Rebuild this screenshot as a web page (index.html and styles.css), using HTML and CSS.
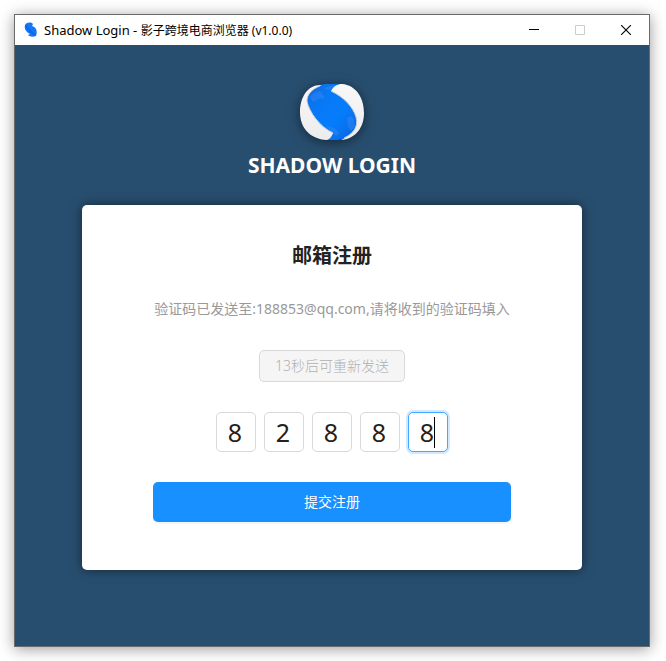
FILE: index.html
```html
<!DOCTYPE html>
<html lang="zh-CN">
<head>
    <meta charset="UTF-8">
    <meta name="viewport" content="width=device-width, initial-scale=1.0">
    <title>Shadow Login</title>
    <link rel="stylesheet" href="styles.css">
</head>
<body>
    <div class="window">
        <header class="titlebar">
            <svg class="titlebar-icon" viewBox="0 0 16 16" aria-hidden="true">
                <path d="M2 3C4 0 8 0 10 2L9 4C13 5 15 9 13 14C10 15 7 15 5 13L7 12C3 10 1 7 2 3Z" fill="#1677f5"/>
                <path d="M3 3C4 7 8 10 12 13" fill="none" stroke="#0b66e8" stroke-width="2"/>
            </svg>
            <span class="titlebar-text"><span class="app-name">Shadow Login - </span>影子跨境电商浏览器 (v1.0.0)</span>
            <div class="window-controls">
                <button type="button" aria-label="最小化">
                    <svg viewBox="0 0 10 10"><path d="M0 4.5H10" stroke="#000"/></svg>
                </button>
                <button type="button" aria-label="最大化" disabled>
                    <svg viewBox="0 0 10 10"><path d="M.5 .5H9.500V9.500H.5Z" fill="none" stroke="#ccc"/></svg>
                </button>
                <button type="button" aria-label="关闭">
                    <svg viewBox="0 0 10 10"><path d="M0 0L10 10M10 0L0 10" stroke="#000" stroke-width="1.1"/></svg>
                </button>
            </div>
        </header>

        <main class="content">
            <svg class="logo" viewBox="0 0 64 56" aria-hidden="true">
                <defs>
                    <linearGradient id="blue" x1="0" y1="0" x2="1" y2="1">
                        <stop offset="0" stop-color="#1668dc"/>
                        <stop offset="0.300" stop-color="#0878f5"/>
                        <stop offset="0.600" stop-color="#057dfb"/>
                        <stop offset="1" stop-color="#0b62dd"/>
                    </linearGradient>
                    <linearGradient id="white" x1="0" y1="0" x2="0" y2="1">
                        <stop offset="0" stop-color="#f8f8f8"/>
                        <stop offset="1" stop-color="#ececee"/>
                    </linearGradient>
                </defs>
                <path d="M20 1C28-1 36-1 40 1L33 7C45 14 54 25 58 36C58 46 51 53 42 55C35 57 29 56 25 55L31 50C18 42 8 27 7 14C10 7 15 2 20 1Z" fill="url(#blue)"/>
                <path d="M10 13C13 9 17 8 20 7L23 11L25 15C20 13 18 16 13 18ZM23 4L31 2L36 1L33 5L28 6ZM47 34L51 32L54 35L55 43L51 47L48 43ZM26 42L34 44L40 49L36 52L32 49Z" fill="#3f8df2" opacity="0.400"/>
                <path d="M22 1C8 0 0 13 0 28C0 43 9 55 27 56C30 55 32 52 33 49C20 43 9 28 7 17C7 9 14 4 22 1Z" fill="url(#white)"/>
                <path d="M31 7C34 2 37 0 42 0C56 1 64 14 64 29C64 44 55 55 41 56C53 50 59 43 56 33C53 23 44 13 31 7Z" fill="url(#white)"/>
                <path d="M20 2C12 5 7 10 7 17C9 28 20 43 33 49" fill="none" stroke="#ccd0d6"/>
                <path d="M31 7C44 13 53 23 56 33C59 43 53 50 44 54" fill="none" stroke="#ccd0d6"/>
            </svg>
            <h1 class="brand">SHADOW LOGIN</h1>

            <form class="card">
                <h2 class="card-title">邮箱注册</h2>
                <p class="hint">验证码已发送至:188853@qq.com,请将收到的验证码填入</p>
                <button class="resend" type="button" disabled>13秒后可重新发送</button>
                <div class="code" role="group" aria-label="验证码">
                    <div class="digit"><input type="text" maxlength="1" value="8" aria-label="第1位"></div>
                    <div class="digit"><input type="text" maxlength="1" value="2" aria-label="第2位"></div>
                    <div class="digit"><input type="text" maxlength="1" value="8" aria-label="第3位"></div>
                    <div class="digit"><input type="text" maxlength="1" value="8" aria-label="第4位"></div>
                    <div class="digit active"><input type="text" maxlength="1" value="8" aria-label="第5位"></div>
                </div>
                <button class="submit" type="submit">提交注册</button>
            </form>
        </main>
    </div>
</body>
</html>
```

FILE: styles.css
```css
* {
    box-sizing: border-box;
}
body {
    margin: 0;
    padding: 14px 16px 14px 14px;
    min-height: 100vh;
    display: flex;
    background: #fff;
    font-family: "Noto Sans", "Noto Sans CJK SC", sans-serif;
    font-size: 14px;
    color: #222;
}
button,
input {
    font-family: inherit;
}
.window {
    flex: 1;
    display: flex;
    flex-direction: column;
    border: 1px solid #686a6c;
    box-shadow: 0 2px 14px rgba(0, 0, 0, 0.4);
}

/* title bar */
.titlebar {
    display: flex;
    align-items: center;
    height: 30px;
    padding-left: 8px;
    background: #fff;
}
.titlebar-icon {
    width: 16px;
    height: 16px;
}
.titlebar-text {
    flex: 1;
    margin-left: 5px;
    font-size: 12px;
    line-height: 16px;
    white-space: nowrap;
    color: #000;
}
.app-name {
    font-size: 13px;
}
.window-controls {
    display: flex;
}
.window-controls button {
    display: flex;
    align-items: center;
    justify-content: center;
    width: 46px;
    height: 30px;
    padding: 0;
    border: none;
    background: none;
}
.window-controls svg {
    width: 10px;
    height: 10px;
}

.content {
    flex: 1;
    display: flex;
    flex-direction: column;
    align-items: center;
    padding: 39px 20px 76px;
    background: #284e6f;
}
.logo {
    width: 64px;
    height: 56px;
    filter: drop-shadow(0 2px 6px rgba(0, 0, 0, 0.5));
}
.brand {
    margin: 10px 0 25px;
    font-size: 21px;
    line-height: 30px;
    font-weight: bold;
    color: #fff;
}

/* register card */
.card {
    display: flex;
    flex-direction: column;
    align-items: center;
    width: 100%;
    max-width: 500px;
    padding: 36px 71px 48px;
    background: #fff;
    border-radius: 5px;
    box-shadow: 0 0 12px rgba(0, 0, 0, 0.5);
}
.card-title {
    margin: 0 0 27px;
    font-size: 20px;
    line-height: 30px;
}
.hint {
    margin: 0 0 30px;
    line-height: 22px;
    white-space: nowrap;
    color: #999;
}
.resend {
    height: 32px;
    padding: 0 15px 2px;
    border: 1px solid #d9d9d9;
    border-radius: 5px;
    background: #f5f5f5;
    color: #b0b0b0;
    font-size: 14px;
    font-weight: 300;
}
.code {
    display: flex;
    gap: 8px;
    margin: 30px 0;
}
.digit {
    position: relative;
    width: 40px;
    height: 40px;
}
.digit input {
    width: 100%;
    height: 100%;
    padding: 0 2px 0 0;
    border: 1px solid #d9d9d9;
    border-radius: 5px;
    outline: none;
    text-align: center;
    font-size: 25px;
    color: #222;
}
.digit.active input {
    border-color: #40a9ff;
    box-shadow: 0 0 0 2px rgba(24, 144, 255, 0.2);
}
/* text caret */
.digit.active::after {
    content: "";
    position: absolute;
    left: 26px;
    top: 5px;
    width: 1px;
    height: 31px;
    background: #000;
}
.submit {
    width: 100%;
    height: 40px;
    padding: 0 0 2px;
    border: none;
    border-radius: 5px;
    background: #1890ff;
    box-shadow: 0 2px 0 rgba(0, 0, 0, 0.04);
    color: #fff;
    font-size: 14px;
}
```
